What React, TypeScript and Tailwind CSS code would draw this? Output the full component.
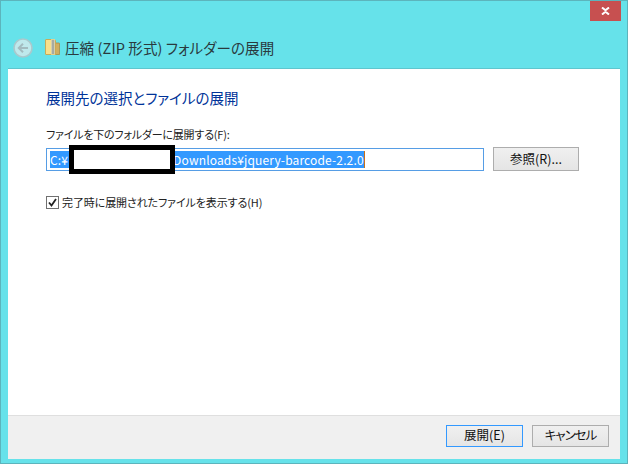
import React from "react";

const font = { fontFamily: '"Noto Sans CJK JP", "Liberation Sans", sans-serif' };

const ZipFolderIcon: React.FC = () => (
  <svg width="15" height="16" viewBox="0 0 15 16" className="shrink-0">
    <path d="M10 4h4a.5.5 0 0 1 .5.5V15.500h-4.500z" fill="#cfae62" stroke="#a88c46" strokeWidth="0.8" />
    <path d="M0.5 1a.5.5 0 0 1 .5-.5h8.500l1 1V15.500H1a.5.5 0 0 1-.5-.5z" fill="#f8e08c" stroke="#c9a64f" strokeWidth="0.9" />
    <rect x="6" y="0.500" width="4" height="15" fill="#fff2bd" />
    <path d="M6.500 2h3M6.500 4h3M6.500 6h3M6.500 8h3M6.500 10h3M6.500 12h3M6.500 14h3" stroke="#4f6488" strokeWidth="1" />
  </svg>
);

const BackIcon: React.FC = () => (
  <svg width="20" height="20" viewBox="0 0 20 20" className="shrink-0">
    <circle cx="10" cy="10" r="9" fill="#bfe9ec" stroke="#a9c9cd" strokeWidth="1.6" />
    <path d="M15 10H6M10 5.800 5.800 10l4.200 4.200" fill="none" stroke="#a3bcc0" strokeWidth="2" />
  </svg>
);

const Btn: React.FC<{ className: string; children: React.ReactNode }> = ({ className, children }) => (
  <button
    className={`flex items-center justify-center bg-gradient-to-b from-[#f0f0f0] to-[#e5e5e5] text-[12.5px] text-[#111] [font-feature-settings:'palt'] ${className}`}
    style={font}
  >
    {children}
  </button>
);

export default function App() {
  return (
    <div
      className="w-[628px] h-[464px] flex flex-col bg-[#66e2ea] border border-[#5cb4bc] overflow-hidden [font-feature-settings:'palt']"
      style={font}
    >
      {/* title bar */}
      <div className="h-[20px] flex justify-end pr-[6px] shrink-0">
        <div className="w-[31px] h-[20px] bg-[#c75050] flex items-center justify-center">
          <svg width="9" height="8" viewBox="0 0 9 8">
            <path d="M1 0.500 4.500 3.200 8 0.500M1 7.500 4.500 4.800 8 7.500" fill="none" stroke="#fff" strokeWidth="2" />
          </svg>
        </div>
      </div>

      {/* nav row */}
      <div className="h-[47px] flex items-center pl-[12px] pt-[7px] shrink-0">
        <BackIcon />
        <div className="ml-[12px] mb-[3px]">
          <ZipFolderIcon />
        </div>
        <span className="ml-[5px] text-[14.5px] leading-none text-[#2a3a3e] tracking-[0.1px] whitespace-nowrap">
          圧縮 (ZIP 形式) フォルダーの展開
        </span>
      </div>

      {/* panel */}
      <div className="mx-[7px] flex-1 flex flex-col border-t border-[#5fc6ce] bg-white min-h-0">
        <div className="flex-1 pl-[38px] pt-[19px]">
          <div className="text-[14.5px] leading-[20px] text-[#003399]">展開先の選択とファイルの展開</div>
          <div className="mt-[18px] text-[11px] leading-[16px] text-[#222] tracking-[-0.2px]">
            ファイルを下のフォルダーに展開する(F):
          </div>
          <div className="mt-[5px] flex items-center">
            <div className="relative w-[438px] h-[23px] border border-[#569de5] flex items-center pl-[3px]">
              <span className="bg-[#3399ff] text-white text-[12px] leading-[17px] w-[315px] whitespace-nowrap tracking-[0.15px] border-r border-[#c8701a]">
                C:¥<span className="inline-block w-[104px]" />
                <span className="ml-[1px]">Downloads¥jquery-barcode-2.2.0</span>
              </span>
              <div className="absolute left-[22px] top-[-4px] w-[106px] h-[29px] bg-white border-[5px] border-black" />
            </div>
            <Btn className="ml-[9px] w-[86px] h-[24px] border border-[#adadad]">参照(R)...</Btn>
          </div>
          <label className="mt-[23px] flex items-center">
            <span className="w-[13px] h-[13px] border border-[#707070] bg-white flex items-center justify-center">
              <svg width="11" height="11" viewBox="0 0 11 11">
                <path d="M2 5.500 4.500 8.500 9 2" fill="none" stroke="#222" strokeWidth="1.8" />
              </svg>
            </span>
            <span className="ml-[3px] text-[11px] leading-[16px] text-[#222] tracking-[-0.1px]">
              完了時に展開されたファイルを表示する(H)
            </span>
          </label>
        </div>

        {/* footer */}
        <div className="h-[44px] shrink-0 bg-[#f0f0f0] border-t border-[#dfdfdf] flex items-center justify-end pr-[11px] pb-[4px] gap-[9px]">
          <Btn className="w-[77px] h-[22px] border border-[#3399ff]">展開(E)</Btn>
          <Btn className="w-[77px] h-[22px] border border-[#adadad] tracking-[-1px]">キャンセル</Btn>
        </div>
      </div>

      <div className="h-[4px] shrink-0" />
    </div>
  );
}
